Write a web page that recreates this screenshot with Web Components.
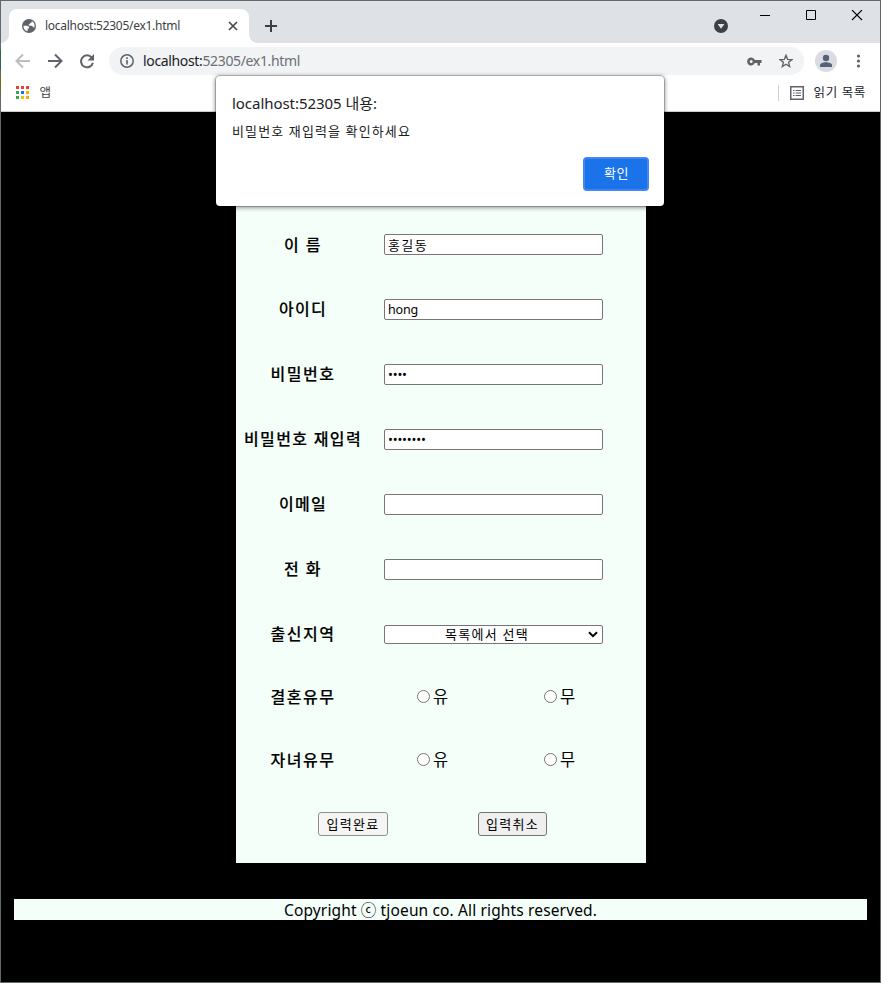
<!DOCTYPE html>
<html lang="ko">
<head>
<meta charset="utf-8">
<title>localhost:52305/ex1.html</title>
<style>
html,body{margin:0;height:100%;overflow:hidden}
body{font-family:"Noto Sans","Noto Sans CJK KR",sans-serif;color:#000}
</style>
</head>
<body>
<browser-window>
  <browser-tabs slot="chrome"></browser-tabs>
  <browser-toolbar slot="chrome"></browser-toolbar>
  <bookmark-bar slot="chrome"></bookmark-bar>
  <join-form>
    <form-row label="이 름" lw="38"><text-field value="홍길동" w="40" size="13"></text-field></form-row>
    <form-row label="아이디" lw="48" up><text-field value="hong" w="30" size="12.5"></text-field></form-row>
    <form-row label="비밀번호" lw="65" up><text-field value="••••" w="18.8" size="13" dy="-1"></text-field></form-row>
    <form-row label="비밀번호 재입력" lw="118" up><text-field value="••••••••" w="37.6" size="13" dy="-1"></text-field></form-row>
    <form-row label="이메일" lw="48" up><text-field></text-field></form-row>
    <form-row label="전 화" lw="38" up><text-field></text-field></form-row>
    <form-row label="출신지역" lw="65" up><select-field></select-field></form-row>
    <form-row label="결혼유무" lw="65" style="height:59px"><yes-no></yes-no></form-row>
    <form-row label="자녀유무" lw="65" style="height:67px"><yes-no></yes-no></form-row>
    <form-buttons></form-buttons>
  </join-form>
  <page-footer></page-footer>
  <alert-dialog slot="dialog"></alert-dialog>
</browser-window>
<script>
const define = (name, html, after) => customElements.define(name, class extends HTMLElement {
  connectedCallback() {
    if (this.shadowRoot) return;
    const t = document.createElement('template');
    t.innerHTML = typeof html === 'function' ? html(this) : html;
    this.attachShadow({mode: 'open'}).append(t.content.cloneNode(true));
    if (after) after(this);
  }
});

/* Text set to a fixed advance width by spreading its letters. */
define('fit-text', el => `<style>
  :host{display:block;flex:none;white-space:pre;width:${el.getAttribute('w')}px;font-size:${el.getAttribute('size') || 13}px;line-height:18px;overflow:visible}
  span{display:inline-block}</style><span><slot></slot></span>`, el => {
  const s = el.shadowRoot.querySelector('span');
  const n = [...el.textContent].length;
  s.style.letterSpacing = (el.getAttribute('w') - s.getBoundingClientRect().width) / n + 'px';
});

define('browser-window', `<style>
  :host{display:flex;flex-direction:column;box-sizing:border-box;width:881px;height:983px;padding:1px;position:relative;
    background:linear-gradient(#66676b 0 50px,#2c6a45 50px 70px,#66676b 70px 73px,#6c6c25 73px 93px,#66676b 93px) left/1px 100% no-repeat,#66676b}
  main{flex:1;background:#000;display:flex;flex-direction:column;align-items:center;border-top:1px solid #c8cacc}
  </style><slot name="chrome"></slot><main><slot></slot></main><slot name="dialog"></slot>`);

define('browser-tabs', `<style>
  :host{display:flex;height:42px;background:#dee1e6;color:#3c4043}
  .tab{margin:8px 0 0 8px;width:240px;height:34px;box-sizing:border-box;background:#fff;border-radius:8px 8px 0 0;display:flex;align-items:center;padding:0 10px 0 13px;position:relative}
  .tab::before,.tab::after{content:"";position:absolute;bottom:0;width:8px;height:8px}
  .tab::before{left:-8px;background:radial-gradient(circle at 0 0,transparent 7.5px,#fff 8px)}
  .tab::after{right:-8px;background:radial-gradient(circle at 100% 0,transparent 7.5px,#fff 8px)}
  fit-text{margin-left:9px}
  svg{display:block;flex:none} .x{margin-left:auto}
  .plus{margin:19px 0 0 16px}.drop{margin:18px 32px 0 auto}.win{margin-top:9px}
  </style>
  <div class="tab">
    <svg width="14" height="14" viewBox="0 0 14 14"><circle cx="7" cy="7" r="7" fill="#5f6368"/><path d="M1.500 6.700h3.300c1.500 0 2.200.8 2.200 1.900v.8H5.600v2.900A5.600 5.600 0 0 1 1.500 6.700zM6.500 1.500 9.700 2c.4 1.300-.4 1.900-1.500 1.900-.2 1.300-.8 1.500-1.700 1.500.2 1.100.8 1.300 2 1.300h1.300c.8 0 1 .8 1 1.500h1.700a5.600 5.600 0 0 0-3-6.200z" fill="#fff"/></svg>
    <fit-text w="135" size="12">localhost:52305/ex1.html</fit-text>
    <svg class="x" width="12" height="12" viewBox="0 0 12 12"><path d="m2 2 8 8m0-8-8 8" stroke="#46494e" stroke-width="1.700"/></svg>
  </div>
  <svg class="plus" width="12" height="12" viewBox="0 0 12 12"><path d="M6 0v12M0 6h12" stroke="#3c4043" stroke-width="2"/></svg>
  <svg class="drop" width="14" height="14" viewBox="0 0 14 14"><circle cx="7" cy="7" r="7" fill="#3c4043"/><path d="M3.600 5h6.800L7 9.800z" fill="#dee1e6"/></svg>
  <svg class="win" width="120" height="12" viewBox="0 0 120 12" fill="none" stroke="#000"><path d="M0 5.500h10M46.500.5h9v9h-9z"/><path d="m92 0 10 10m0-10-10 10" stroke-width="1.100"/></svg>`);

define('browser-toolbar', `<style>
  :host{display:flex;height:36px;background:#fff;align-items:center;box-sizing:border-box;padding:0 14px 0 14px}
  svg{display:block;flex:none}
  .nav{display:flex;gap:16px;width:94px}
  .box{width:695px;height:28px;border-radius:14px;background:#f1f3f4;box-sizing:border-box;display:flex;align-items:center;padding:0 11px}
  .info{margin-right:9px}.key{margin-left:auto;margin-right:17px}
  fit-text{color:#6b6f74} b{font-weight:400;color:#202124}
  .who{width:22px;height:22px;border-radius:50%;background:#dadce3;margin-left:11px;overflow:hidden}
  .more{margin:0 -20px 0 16px}
  </style>
  <div class="nav">
    <svg width="16" height="16" viewBox="0 0 16 16" fill="none" stroke="#bbbdc0" stroke-width="2"><path d="M15 8H2.500M8 1.500 1.500 8 8 14.500"/></svg>
    <svg width="16" height="16" viewBox="0 0 16 16" fill="none" stroke="#5f6368" stroke-width="2"><path d="M1 8h12.500M8 1.500 14.500 8 8 14.500"/></svg>
    <svg width="16" height="16" viewBox="0 0 16 16"><path d="M12.700 4.500A6 6 0 1 0 13.900 9.800" fill="none" stroke="#5f6368" stroke-width="2"/><path d="M15 1v6.500H8.500z" fill="#5f6368"/></svg>
  </div>
  <div class="box">
    <svg class="info" width="14" height="14" viewBox="0 0 14 14"><circle cx="7" cy="7" r="6.200" fill="none" stroke="#5f6368" stroke-width="1.500"/><path d="M7 6v4.500M7 3.300v1.600" stroke="#5f6368" stroke-width="1.600"/></svg>
    <fit-text w="157" size="14"><b>localhost:</b>52305/ex1.html</fit-text>
    <svg class="key" width="15" height="9" viewBox="0 0 15 9"><path fill-rule="evenodd" fill="#5f6368" d="M7.800 3A4 4 0 1 0 7.800 6h2.700v2.500h2.500V6H14.500V3zM4.200 3a1.500 1.500 0 1 1 0 3 1.500 1.500 0 0 1 0-3z"/></svg>
    <svg width="14" height="14" viewBox="0 0 14 14" fill="none" stroke="#5f6368" stroke-width="1.300"><path d="m7 1.200 1.600 4.100 4.400.3-3.400 2.700 1.100 4.300L7 10.200l-3.700 2.400 1.100-4.300L1 5.600l4.400-.3z"/></svg>
  </div>
  <svg class="who" viewBox="0 0 22 22" fill="#56607a"><circle cx="11" cy="8" r="3.200"/><path d="M5 17v-1.700c0-2 3-3 6-3s6 1 6 3V17z"/></svg>
  <svg class="more" width="14" height="14" viewBox="0 0 14 14" fill="#5f6368"><circle cx="5.500" cy="2" r="1.600"/><circle cx="5.500" cy="7" r="1.600"/><circle cx="5.500" cy="12" r="1.600"/></svg>`);

define('bookmark-bar', `<style>
  :host{display:flex;height:32px;background:#fff;align-items:center;box-sizing:border-box;padding:0 14px 4px 15px;color:#3c4043}
  svg{display:block;flex:none}
  .apps{display:grid;grid-template-columns:repeat(3,3px);grid-auto-rows:3px;gap:2px;margin:0 10.500px 1px 0}
  .sep{margin-left:auto;width:1px;height:16px;background:#cfd0d2;margin-right:11px}
  .list{margin-right:9.500px}
  </style>
  <div class="apps"><i style="background:#ea4335"></i><i style="background:#ea4335"></i><i style="background:#ea4335"></i><i style="background:#34a853"></i><i style="background:#1a73e8"></i><i style="background:#f9ab00"></i><i style="background:#34a853"></i><i style="background:#fbbc04"></i><i style="background:#f9ab00"></i></div>
  <fit-text w="12" size="12.500">앱</fit-text>
  <div class="sep"></div>
  <svg class="list" width="14" height="14" viewBox="0 0 14 14" fill="none" stroke="#5f6368"><path d="M.75.75h12.500v12.500H.75z" stroke-width="1.500"/><path d="M3 4.500h1.500M5.500 4.500H11M3 7h1.500M5.500 7H11M3 9.500h1.500M5.500 9.500H11" stroke-width="1.200"/></svg>
  <fit-text w="52.500" size="12.500" style="color:#202124">읽기 목록</fit-text>`);

define('alert-dialog', `<style>
  :host{position:absolute;left:216px;top:76px;width:448px;height:130px;box-sizing:border-box;background:#fff;border-radius:4px;padding:18px 15px 15px 16px;display:flex;flex-direction:column;color:#202124;box-shadow:0 0 0 1px rgba(0,0,0,.2),0 1px 4px 1px rgba(0,0,0,.4)}
  .msg{margin-top:10px}
  button{font:inherit;margin:auto 0 0 auto;width:66px;height:34px;box-sizing:border-box;border:2px solid #4285f4;border-radius:4px;background:#1a73e8;color:#fff;display:flex;align-items:center;justify-content:center;padding:0 0 2px 1px}
  </style>
  <fit-text w="145" size="15">localhost:52305 내용:</fit-text>
  <fit-text class="msg" w="179" size="13">비밀번호 재입력을 확인하세요</fit-text>
  <button><fit-text w="25" size="13">확인</fit-text></button>`);

define('join-form', `<style>
  :host{display:block;width:410px;box-sizing:border-box;margin-top:68px;padding:32px 0 8px;background:#f5fffa}
  </style><slot></slot>`);

define('form-row', el => `<style>
  :host{display:grid;grid-template-columns:132px 1fr;align-items:center;height:65px}
  .l{display:flex;justify-content:center;padding-left:3px}
  :host([up]) .l{padding-bottom:2px}
  fit-text{font-weight:500;-webkit-text-stroke:.15px #000}
  </style><div class="l"><fit-text w="${el.getAttribute('lw')}" size="16">${el.getAttribute('label')}</fit-text></div><slot></slot>`);

define('text-field', el => `<style>
  :host{display:flex;align-items:center;width:219px;height:21px;margin-left:16px;box-sizing:border-box;border:1px solid #767676;border-radius:2px;background:#fff;padding-left:3.500px}
  fit-text{position:relative;top:${el.getAttribute('dy') || 0}px}
  </style>${el.getAttribute('value') ? `<fit-text w="${el.getAttribute('w')}" size="${el.getAttribute('size') || 12.5}">${el.getAttribute('value')}</fit-text>` : ''}`);

define('select-field', `<style>
  :host{display:flex;align-items:center;width:219px;height:19px;margin-left:16px;box-sizing:border-box;border:1px solid #767676;border-radius:2px;background:#fff;padding:0 4px 0 60.500px}
  svg{margin-left:auto} fit-text{padding-bottom:2px}
  </style><fit-text w="84" size="13">목록에서 선택</fit-text><svg width="10" height="7" viewBox="0 0 10 7"><path d="m1 1.200 4 4 4-4" fill="none" stroke="#000" stroke-width="2"/></svg>`);

define('yes-no', `<style>
  :host{display:grid;grid-template-columns:127px 127px;padding-left:49px}
  label{display:flex;align-items:center;gap:3.500px}
  i{width:13px;height:13px;box-sizing:border-box;border:1px solid #767676;border-radius:50%;background:#fff}
  </style><label><i></i><fit-text w="17" size="16.500">유</fit-text></label><label><i></i><fit-text w="17" size="16.500">무</fit-text></label>`);

define('form-buttons', `<style>
  :host{display:flex;height:62px;align-items:center;gap:90px;padding-left:82px}
  button{font:inherit;color:#000;height:24px;box-sizing:border-box;border:1px solid #767676;border-radius:3px;background:#efefef;padding:0 0 0 1px;display:flex;align-items:center;justify-content:center}
  .a{width:70px;background:#f5f5f5;border-color:#8f8f8f}.b{width:69px}
  </style><button class="a"><fit-text w="53" size="13">입력완료</fit-text></button><button class="b"><fit-text w="53" size="13">입력취소</fit-text></button>`);

define('page-footer', `<style>
  :host{display:flex;justify-content:center;align-items:center;width:853px;height:21px;margin-top:36px;background:#f5fffa}
  </style><fit-text w="313" size="15.500">Copyright ⓒ tjoeun co. All rights reserved.</fit-text>`);
</script>
</body>
</html>
